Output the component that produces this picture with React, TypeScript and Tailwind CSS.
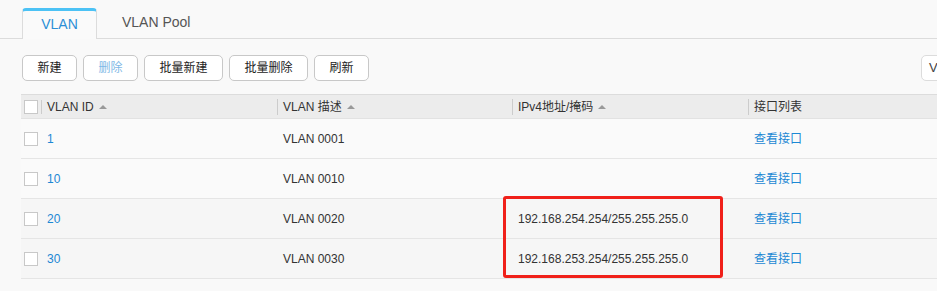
import React from 'react';

const rows = [
  { id: '1', desc: 'VLAN 0001', ip: '' },
  { id: '10', desc: 'VLAN 0010', ip: '' },
  { id: '20', desc: 'VLAN 0020', ip: '192.168.254.254/255.255.255.0' },
  { id: '30', desc: 'VLAN 0030', ip: '192.168.253.254/255.255.255.0' },
];

const buttons = [
  { label: '新建', w: 'w-[55px]', disabled: false },
  { label: '删除', w: 'w-[55px]', disabled: true },
  { label: '批量新建', w: 'w-[79px]', disabled: false },
  { label: '批量删除', w: 'w-[79px]', disabled: false },
  { label: '刷新', w: 'w-[55px]', disabled: false },
];

function SortArrow() {
  return (
    <svg className="ml-[5px] h-[6px] w-[8px]" viewBox="0 0 8 6">
      <path d="M0 5 L4 1 L8 5 Z" fill="#999" />
    </svg>
  );
}

function Checkbox() {
  return <div className="h-[14px] w-[14px] border border-[#c8c8c8] bg-white" />;
}

export default function App() {
  return (
    <div
      className="relative h-[291px] w-[937px] overflow-hidden bg-[#f9f9f9] text-[12px] text-[#333]"
      style={{ fontFamily: '"Liberation Sans", "Noto Sans CJK SC", sans-serif' }}
    >
      {/* Tabs */}
      <div className="flex h-[39px] items-end border-b border-[#dcdcdc] pl-[22px]">
        <div className="-mb-[1px] flex h-[31px] w-[75px] items-center justify-center rounded-t-[4px] border-x border-t-[3px] border-x-[#dcdcdc] border-t-[#4cc2f5] bg-[#fafafa] pb-[1px] text-[14px] text-[#2b8fd6]">
          VLAN
        </div>
        <div className="flex h-[31px] items-center pl-[25px] pb-[1px] text-[14px] text-[#555]">
          VLAN Pool
        </div>
      </div>

      {/* Toolbar */}
      <div className="mt-[16px] flex items-center gap-[6px] pl-[22px]">
        {buttons.map((b) => (
          <button
            key={b.label}
            className={`flex h-[26px] ${b.w} items-center justify-center rounded-[5px] border border-[#c8c8c8] bg-white text-[12px] ${
              b.disabled ? 'text-[#7fb8e6]' : 'text-[#222]'
            }`}
          >
            {b.label}
          </button>
        ))}
        <div className="ml-auto flex h-[26px] w-[30px] translate-x-[14px] items-center rounded-[5px] border border-[#dcdcdc] bg-white pl-[7px] text-[13px] text-[#444]">
          V
        </div>
      </div>

      {/* Table */}
      <div className="relative ml-[21px] mt-[13px]">
        <div className="flex h-[25px] items-center border-y border-t-[#dcdcdc] border-b-[#e2e2e2] bg-[#ececec] text-[#333]">
          <div className="flex w-[256px] items-center pl-[3px]">
            <Checkbox />
            <div className="ml-[3px] mr-[5px] h-[14px] w-px bg-[#ccc]" />
            <span>VLAN ID</span>
            <SortArrow />
          </div>
          <div className="flex w-[235px] items-center">
            <div className="mr-[5px] h-[16px] w-px bg-[#ccc]" />
            <span>VLAN 描述</span>
            <SortArrow />
          </div>
          <div className="flex w-[236px] items-center">
            <div className="mr-[5px] h-[16px] w-px bg-[#ccc]" />
            <span>IPv4地址/掩码</span>
            <SortArrow />
          </div>
          <div className="flex items-center">
            <div className="mr-[5px] h-[16px] w-px bg-[#ccc]" />
            <span>接口列表</span>
          </div>
        </div>

        {rows.map((r, i) => (
          <div
            key={r.id}
            className={`flex h-[40px] items-center border-b border-[#e5e5e5] ${
              i >= 2 ? 'bg-[#f6f6f6]' : 'bg-[#fafafa]'
            }`}
          >
            <div className="flex w-[256px] items-center pl-[3px]">
              <Checkbox />
              <span className="ml-[9px] text-[#1c88d4]">{r.id}</span>
            </div>
            <div className="w-[235px] pl-[6px]">{r.desc}</div>
            <div className="w-[236px] pl-[6px]">{r.ip}</div>
            <div className="pl-[6px] text-[#1c88d4]">查看接口</div>
          </div>
        ))}

        {/* Highlight box */}
        <div className="absolute left-[482px] top-[102px] h-[82px] w-[220px] rounded-[3px] border-[3px] border-[#f0201a]" />
      </div>
    </div>
  );
}
